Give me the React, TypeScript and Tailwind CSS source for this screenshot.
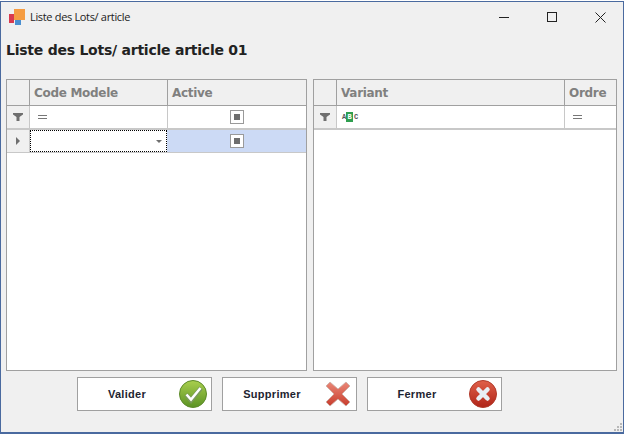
import React from 'react';

const FilterIcon = () => (
  <svg width="10" height="8" viewBox="0 0 10 8">
    <path d="M0 0h10v1.5L6.5 4V8h-3V4L0 1.5z" fill="#6f6f6f" />
  </svg>
);

const EqualsIcon = () => (
  <div className="flex flex-col gap-[2px] w-[9px]">
    <div className="h-px bg-[#777777]" />
    <div className="h-px bg-[#777777]" />
  </div>
);

const CheckBox = () => (
  <div className="w-[14px] h-[14px] border border-[#9a9a9a] bg-white flex items-center justify-center">
    <div className="w-[6px] h-[6px] bg-[#6e6e6e]" />
  </div>
);

const HeaderCell = ({ label, className }: any) => (
  <div className={`h-[26px] pl-1 flex items-center border-b border-[#a0a0a0] text-[12px] font-bold text-[#80807f] font-['DejaVu_Sans',sans-serif] tracking-[-0.3px] ${className}`}>
    {label}
  </div>
);

const AppIcon = () => (
  <svg width="16" height="16" viewBox="0 0 16 16">
    <rect x="0" y="5" width="5" height="9" fill="#d9394e" />
    <rect x="5" y="0" width="11" height="11" fill="#f59c42" />
    <rect x="6" y="11" width="6" height="5" fill="#4a8fd0" />
  </svg>
);

const ValidIcon = () => (
  <svg width="28" height="28" viewBox="0 0 28 28">
    <defs>
      <linearGradient id="g1" x1="0" y1="0" x2="0" y2="1">
        <stop offset="0" stopColor="#a9cf4e" />
        <stop offset="1" stopColor="#5b9224" />
      </linearGradient>
    </defs>
    <circle cx="14" cy="14" r="13.5" fill="url(#g1)" stroke="#5d8a2a" />
    <path d="M7 14.5l5 6L22 8" fill="none" stroke="#7a9a5a" strokeWidth="4.5" />
    <path d="M7.5 14.5l4.5 5L21.5 8" fill="none" stroke="#ffffff" strokeWidth="2.5" />
  </svg>
);

const DeleteIcon = () => (
  <svg width="26" height="26" viewBox="0 0 26 26" className="mr-[1px]">
    <defs>
      <linearGradient id="g2" x1="0" y1="0" x2="0" y2="1">
        <stop offset="0" stopColor="#ea8878" />
        <stop offset="1" stopColor="#c83c2c" />
      </linearGradient>
    </defs>
    <path d="M5 1l8 7 8-7 4 4-8 8 8 8-4 4-8-7-8 7-4-4 8-8-8-8z" fill="url(#g2)" stroke="#c9b0a8" strokeWidth="0.8" />
  </svg>
);

const CloseIcon = () => (
  <svg width="28" height="28" viewBox="0 0 28 28">
    <defs>
      <linearGradient id="g3" x1="0" y1="0" x2="0" y2="1">
        <stop offset="0" stopColor="#e0604a" />
        <stop offset="1" stopColor="#b02418" />
      </linearGradient>
    </defs>
    <circle cx="14" cy="14" r="13.5" fill="url(#g3)" stroke="#b03a2a" />
    <path d="M9.5 9.5l9 9M18.5 9.5l-9 9" stroke="#e8eef5" strokeWidth="4.5" strokeLinecap="round" />
  </svg>
);

const ActionButton = ({ label, icon }: any) => (
  <button className="w-[135px] h-[34px] bg-white border border-[#a0a0a0] flex items-center justify-between pr-[4px] text-[11px] font-bold text-[#1e2430] font-['Liberation_Sans',sans-serif] tracking-[0.3px]">
    <span className="w-[98px] text-center">{label}</span>
    {icon}
  </button>
);

const App = () => {
  return (
    <div className="w-[624px] h-[434px] bg-white overflow-hidden">
      <div className="w-[624px] h-[433px] mt-px bg-[#f0f0f0] border border-[#4a6a9f] border-b-2 flex flex-col relative font-['Liberation_Sans',sans-serif]">
        {/* Title bar */}
        <div className="h-[30px] flex items-center pl-[8px] shrink-0">
          <AppIcon />
          <span className="ml-[5px] text-[11px] text-[#222222] font-['Open_Sans',sans-serif] tracking-[-0.33px]">Liste des Lots/ article</span>
          <div className="ml-auto -mr-px flex items-center text-[#222222]">
            <div className="w-[48px] flex justify-center"><div className="w-[10px] h-px bg-[#222222]" /></div>
            <div className="w-[48px] flex justify-center"><div className="w-[10px] h-[10px] border border-[#222222]" /></div>
            <div className="w-[48px] flex justify-center">
              <svg width="11" height="11" viewBox="0 0 11 11">
                <path d="M0.5 0.5l10 10M10.5 0.5l-10 10" stroke="#222222" strokeWidth="1" fill="none" />
              </svg>
            </div>
          </div>
        </div>

        <h1 className="pl-[5px] pt-[8px] h-[47px] shrink-0 text-[14px] font-bold text-[#222222] font-['DejaVu_Sans',sans-serif] tracking-[-0.24px]">
          Liste des Lots/ article article 01
        </h1>

        {/* Grids */}
        <div className="flex gap-[6px] px-[5px] h-[292px] shrink-0">
          <div className="w-[301px] border border-[#a0a0a0] bg-white flex flex-col">
            <div className="flex bg-[#f0f0f0]">
              <HeaderCell label="" className="w-[23px] border-r" />
              <HeaderCell label="Code Modele" className="w-[138px] border-r" />
              <HeaderCell label="Active" className="flex-1" />
            </div>
            <div className="flex h-[24px] border-b-2 border-[#c8c8c8]">
              <div className="w-[23px] flex items-center justify-center bg-[#f0f0f0] border-r border-[#c8c8c8]"><FilterIcon /></div>
              <div className="w-[138px] flex items-center pl-2 border-r border-[#c8c8c8]"><EqualsIcon /></div>
              <div className="flex-1 flex items-center justify-center"><CheckBox /></div>
            </div>
            <div className="flex h-[23px] border-b border-[#c8c8c8]">
              <div className="w-[23px] flex items-center justify-center bg-[#f0f0f0] border-r border-[#c8c8c8]">
                <div className="w-0 h-0 border-y-[4px] border-y-transparent border-l-[4px] border-l-[#6f6f6f]" />
              </div>
              <div className="w-[137px] flex items-center justify-end pr-1 border border-dotted border-black">
                <div className="w-0 h-0 border-x-[3px] border-x-transparent border-t-[3px] border-t-[#6f6f6f]" />
              </div>
              <div className="flex-1 flex items-center justify-center bg-[#ccdaf5]"><CheckBox /></div>
            </div>
          </div>

          <div className="w-[304px] border border-[#a0a0a0] bg-white flex flex-col">
            <div className="flex bg-[#f0f0f0]">
              <HeaderCell label="" className="w-[23px] border-r" />
              <HeaderCell label="Variant" className="w-[228px] border-r" />
              <HeaderCell label="Ordre" className="flex-1" />
            </div>
            <div className="flex h-[24px] border-b-2 border-[#c8c8c8]">
              <div className="w-[23px] flex items-center justify-center bg-[#f0f0f0] border-r border-[#c8c8c8]"><FilterIcon /></div>
              <div className="w-[228px] flex items-center pl-[5px] border-r border-[#c8c8c8]">
                <div className="flex items-center h-[10px] text-[7px] leading-none font-['Liberation_Mono',monospace] font-bold text-[#555555]">
                  <span className="w-[4px]">A</span>
                  <span className="w-[7px] h-[10px] bg-[#2f9e4f] text-white flex items-center justify-center">B</span>
                  <span className="w-[4px] ml-px">C</span>
                </div>
              </div>
              <div className="flex-1 flex items-center pl-2"><EqualsIcon /></div>
            </div>
          </div>
        </div>

        {/* Buttons */}
        <div className="flex gap-[10px] pl-[76px] pt-[6px]">
          <ActionButton label="Valider" icon={<ValidIcon />} />
          <ActionButton label="Supprimer" icon={<DeleteIcon />} />
          <ActionButton label="Fermer" icon={<CloseIcon />} />
        </div>

        {/* Size grip */}
        <div className="absolute right-px bottom-px grid grid-cols-3 gap-px w-[8px] h-[8px]">
          <div /><div /><div className="bg-[#b8b8b8]" />
          <div /><div className="bg-[#b8b8b8]" /><div className="bg-[#b8b8b8]" />
          <div className="bg-[#b8b8b8]" /><div className="bg-[#b8b8b8]" /><div className="bg-[#b8b8b8]" />
        </div>
      </div>
    </div>
  );
};

export default App;
